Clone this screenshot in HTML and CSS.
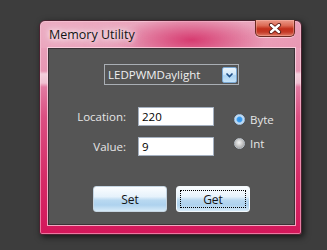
FILE: index.html
```html
<!DOCTYPE html>
<html>
<head>
<meta charset="utf-8">
<link rel="stylesheet" href="styles.css">
</head>
<body>
<div class="window">
  <div class="titlebar">
    <span class="title">Memory Utility</span>
    <div class="close">
      <svg width="14" height="11" viewBox="0 0 14 11">
        <path d="M3 2 L11 9 M11 2 L3 9" stroke="#5a1a14" stroke-width="4.2" stroke-linecap="round"/>
        <path d="M3 2 L11 9 M11 2 L3 9" stroke="#ffffff" stroke-width="2.4" stroke-linecap="round"/>
      </svg>
    </div>
  </div>
  <div class="client">
    <div class="combo">
      <span class="combo-text">LEDPWMDaylight</span>
      <span class="combo-btn">
        <svg width="9" height="6" viewBox="0 0 9 6"><path d="M1.5 1.5 L4.5 4.5 L7.5 1.5" fill="none" stroke="#1f4e86" stroke-width="1.6"/></svg>
      </span>
    </div>
    <div class="form">
      <div class="fields">
        <label class="lbl">Location:</label>
        <div class="input">220</div>
        <label class="lbl">Value:</label>
        <div class="input">9</div>
      </div>
      <div class="radios">
        <div class="radio-row"><span class="radio on"></span><span class="rlabel">Byte</span></div>
        <div class="radio-row"><span class="radio"></span><span class="rlabel">Int</span></div>
      </div>
    </div>
    <div class="buttons">
      <div class="btn">Set</div>
      <div class="btn focus"><span class="focus-ring">Get</span></div>
    </div>
  </div>
</div>
</body>
</html>
```
FILE: styles.css
```css
html, body {
  margin: 0;
  padding: 0;
}
body {
  width: 327px;
  height: 250px;
  background: #3d3d3d;
  font-family: "Open Sans", "DejaVu Sans", sans-serif;
  font-size: 11.5px;
  overflow: hidden;
}
.window {
  margin: 20px 0 0 39px;
  width: 263px;
  height: 215px;
  box-sizing: border-box;
  padding: 0 6px 9px 8px;
  border-radius: 6px 6px 3px 3px;
  border: 1px solid #4a2230;
  display: flex;
  flex-direction: column;
  background:
    linear-gradient(to bottom, #eaa8bf 0, #e796b3 50px, #f3cfdc 53px, #f0c0d1 62px, #e27aa1 66px, #db4f82 45%, #d52a66 75%, #d3175a 100%);
  box-shadow: 2px 2px 6px rgba(0,0,0,0.65), inset 0 0 0 1px rgba(255,220,232,0.5);
}
.titlebar {
  height: 27px;
  flex: none;
  display: flex;
  justify-content: space-between;
  align-items: flex-start;
  margin: 0 -6px 0 -8px;
  padding: 0 6px 0 8px;
  border-radius: 6px 6px 0 0;
  background:
    radial-gradient(ellipse 75px 24px at 58% 70%, rgba(212,48,104,0.9), rgba(212,48,104,0) 100%),
    linear-gradient(to right, rgba(240,180,200,0.4), rgba(0,0,0,0) 40%, rgba(0,0,0,0) 70%, rgba(235,140,170,0.3));
}
.title {
  margin-top: 5px;
  margin-left: 1px;
  line-height: 18px;
  font-size: 12.5px;
  color: #141414;
  text-shadow: 0 0 5px #fff, 0 0 9px rgba(255,255,255,0.9), 0 0 14px rgba(255,255,255,0.7);
}
.close {
  width: 40px;
  height: 17px;
  margin-top: -1px;
  box-sizing: border-box;
  border: 1px solid #6b2a22;
  border-top: none;
  border-radius: 0 0 5px 5px;
  background: linear-gradient(to bottom, #eb9a8a 0, #dc6a55 35%, #c2301c 55%, #c43a28 75%, #e07a66 100%);
  box-shadow: inset 0 0 0 1px rgba(255,200,190,0.35), 0 1px 0 rgba(255,230,235,0.6);
  display: flex;
  align-items: center;
  justify-content: center;
}
.client {
  flex: 1;
  background: #555555;
  border: 1px solid #3a3236;
  box-shadow: 0 0 0 1px rgba(255,225,235,0.7);
  display: flex;
  flex-direction: column;
  align-items: center;
}
.combo {
  margin-top: 15px;
  width: 135px;
  height: 21px;
  box-sizing: border-box;
  border: 1px solid #a9aeb4;
  display: flex;
  align-items: center;
  justify-content: space-between;
  padding: 0 1px 0 3px;
  color: #f0f0f0;
}
.combo-text {
  line-height: 16px;
}
.combo-btn {
  width: 15px;
  height: 16px;
  box-sizing: border-box;
  border: 1px solid #7aa8d4;
  border-radius: 2px;
  background: linear-gradient(to bottom, #eaf5fd 0, #cfe6f8 45%, #a9d2f2 55%, #c6e3f8 100%);
  display: flex;
  align-items: center;
  justify-content: center;
}
.form {
  margin-top: 22px;
  display: flex;
  align-self: flex-start;
}
.fields {
  display: grid;
  grid-template-columns: 77px 76px;
  column-gap: 12px;
  row-gap: 11px;
  align-items: center;
}
.lbl {
  text-align: right;
  color: #e6e6e6;
  line-height: 19px;
}
.input {
  height: 19px;
  box-sizing: border-box;
  background: #ffffff;
  border: 1px solid #a4b0c0;
  padding-left: 3px;
  color: #000;
  line-height: 17px;
}
.radios {
  margin-left: 20px;
  padding-top: 4px;
  display: flex;
  flex-direction: column;
  gap: 8px;
}
.radio-row {
  display: flex;
  align-items: center;
  gap: 5px;
  height: 16px;
  color: #e6e6e6;
}
.radio {
  width: 11px;
  height: 11px;
  border-radius: 50%;
  box-sizing: border-box;
  border: 1px solid #b8c0c8;
  background: radial-gradient(circle at 45% 40%, #f4f4f4 0, #c8c8c8 45%, #8c8c8c 100%);
}
.radio.on {
  border: 1px solid #a8c8e8;
  background: radial-gradient(circle at 50% 50%, #2f8ee6 0, #3a9cf0 35%, #bcdaf4 55%, #dfeaf4 100%);
}
.buttons {
  margin-top: auto;
  margin-bottom: 12px;
  display: flex;
  gap: 9px;
}
.btn {
  width: 74px;
  height: 26px;
  box-sizing: border-box;
  border: 1px solid #c5d5e2;
  border-radius: 3px;
  background: linear-gradient(to bottom, #fbfdff 0, #e6f2fb 40%, #b9d9f1 55%, #aed2ee 75%, #d6eaf8 100%);
  display: flex;
  align-items: center;
  justify-content: center;
  color: #141414;
  font-size: 12px;
}
.btn.focus {
  border-color: #f2f8fc;
  padding: 3px;
}
.focus-ring {
  width: 100%;
  height: 100%;
  box-sizing: border-box;
  border: 1px dotted #000;
  display: flex;
  align-items: center;
  justify-content: center;
}
```
